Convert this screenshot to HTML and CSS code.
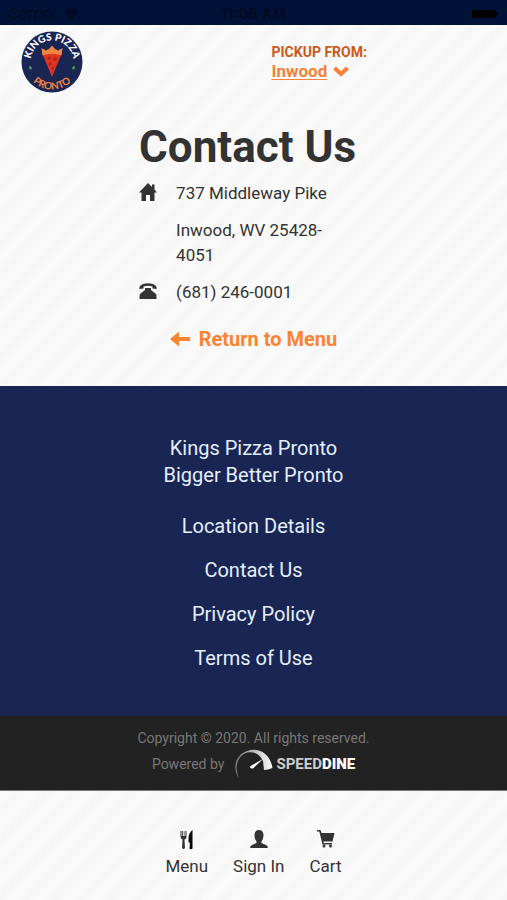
FILE: index.html
```html
<!DOCTYPE html>
<html lang="en">
<head>
<meta charset="utf-8">
<meta name="viewport" content="width=device-width, initial-scale=1">
<title>Contact Us - Kings Pizza Pronto</title>
<link rel="stylesheet" href="styles.css">
</head>
<body>
<div class="status">
  <div class="carrier"><span>Carrier</span>
    <svg width="16" height="12" viewBox="0 0 16 12" aria-hidden="true"><path d="M1 4.500Q8-2 15 4.500M3.500 7Q8 3 12.500 7" fill="none" stroke="currentColor" stroke-width="2.200"/><path d="M5.500 8.700Q8 6.700 10.500 8.700L8 11.500Z" fill="currentColor"/></svg>
  </div>
  <span>11:08 AM</span>
  <div class="battery"><svg width="28" height="10" viewBox="0 0 28 10" aria-hidden="true"><rect x="1" y="1" width="24" height="8" rx="2"/><rect x="25" y="3" width="2" height="4" rx="1"/></svg></div>
</div>
<header class="header">
  <a href="#" class="brand" aria-label="Kings Pizza Pronto">
    <svg width="62" height="62" viewBox="0 0 62 62">
      <defs><path id="top-arc" d="M12 41A21.500 21.500 0 1 1 50 41"/><path id="bottom-arc" d="M3.500 31A27.500 27.500 0 0 0 58.500 31"/></defs>
      <circle cx="31" cy="31" r="30.500" fill="#192552"/>
      <text class="logo-top"><textPath href="#top-arc" startOffset="50%">KINGS PIZZA</textPath></text>
      <text class="logo-bottom"><textPath href="#bottom-arc" startOffset="50%">PRONTO</textPath></text>
      <path d="M21 22Q31 18 41 22L31 46Z" fill="#dd3420"/>
      <path d="M20.500 17L25 19.500 28 18 31 14.500 34 18 37 19.500 41.500 17 40.500 24.500Q31 21 21.500 24.500Z" fill="#ef8440"/>
      <g fill="#b71c20"><circle cx="28" cy="27" r="1.500"/><circle cx="34" cy="28" r="1.800"/><circle cx="29" cy="33" r="1.400"/><circle cx="32" cy="37" r="1.200"/></g>
      <path d="M8 36Q8 34.500 10 35.500L11 37Q10 39 8.500 38.500ZM54 36Q54 34.500 52 35.500L51 37Q52 39 53.500 38.500Z" fill="#5d9c55"/>
    </svg>
  </a>
  <div class="pickup">
    <span class="pickup-label">PICKUP FROM:</span>
    <a href="#" class="pickup-place"><span>Inwood</span><svg width="16" height="11" viewBox="0 0 16 11" aria-hidden="true"><path d="M1.500 2L8 8 14.500 2" fill="none" stroke="currentColor" stroke-width="4"/></svg></a>
  </div>
</header>
<main class="main">
  <div class="contact">
    <h1>Contact Us</h1>
    <address>
      <svg width="18" height="20" viewBox="0 -2 18 20" aria-hidden="true"><path d="M9 0L13 4V1.500H15.500V6.500L18 9.500H15.500V18H11V12H7V18H2.500V9.500H0Z"/></svg>
      <div><p>737 Middleway Pike</p><p>Inwood, WV 25428-4051</p></div>
      <svg width="18" height="20" viewBox="0 -2 18 20" aria-hidden="true"><path d="M.3 7Q0 3.500 4 2Q9 .3 14 2Q18 3.500 17.700 7L13.500 6.500V4.500Q9 3 4.500 4.500V6.500ZM6 6H12V8L17 12Q17.500 12.500 17.500 17H.5Q.5 12.500 1 12L6 8Z"/></svg>
      <p>(681) 246-0001</p>
    </address>
  </div>
  <a href="#" class="return"><svg width="20" height="16" viewBox="0 0 20 16" aria-hidden="true"><path d="M0 8L9 .5V6H20V10H9V15.500Z" fill="currentColor"/></svg><span>Return to Menu</span></a>
</main>
<footer>
  <div class="links">
    <p>Kings Pizza Pronto<br>Bigger Better Pronto</p>
    <a href="#">Location Details</a>
    <a href="#">Contact Us</a>
    <a href="#">Privacy Policy</a>
    <a href="#">Terms of Use</a>
  </div>
  <div class="legal">
    <div>Copyright © 2020. All rights reserved.</div>
    <div class="powered"><span>Powered by</span>
      <a href="#" class="speeddine"><svg width="39" height="30" viewBox="0 0 39 30" aria-hidden="true"><defs><linearGradient id="dial" x2="1" y2="0"><stop stop-color="#777"/><stop offset="1" stop-color="#fff"/></linearGradient></defs><path d="M5 29.500C-2 20 1 6 13 2C24-2 36 4 38.500 19Q34 21 30 21L29 12C24 1 11 1 5.500 9Q0 18 5 29.500Z" fill="url(#dial)"/><path d="M29 10L16.500 17Q15.500 20 19 19.500Z" fill="#fff"/></svg><span>SPEED<b>DINE</b></span></a>
    </div>
  </div>
</footer>
<nav class="nav">
  <a href="#"><svg width="20" height="20" viewBox="0 0 20 20" aria-hidden="true"><path d="M3.500 1V7Q4 9 5.500 9.500L5 18Q6.500 20 8 18L7.500 9.500Q9.500 9 9.500 7V1H8.500V6H7.500V1H6.800V6H5.800V1H5V6H4.500V1Z"/><path d="M15.500 0Q11.500 3 11.500 9V12L13 13 12.500 18.500Q14 20 15.500 18.500Z" fill="#000"/></svg><span>Menu</span></a>
  <a href="#"><svg width="20" height="20" viewBox="0 0 20 20" aria-hidden="true"><path d="M10 0Q14.500 0 14.500 5.500Q14.500 9 12.500 11.500V13L17 15Q18.800 15.500 18.800 18H1.200Q1.200 15.500 3 15L7.500 13V11.500Q5.500 9 5.500 5.500Q5.500 0 10 0Z"/></svg><span>Sign In</span></a>
  <a href="#"><svg width="20" height="20" viewBox="0 0 20 20" aria-hidden="true"><path d="M1 0H4.500L5.500 3H18.500L16.500 11.500H7.500L7.800 13H16V14.500H6.500L3.300 1.500H1Z"/><circle cx="8" cy="16" r="1.500"/><circle cx="14.500" cy="16" r="1.500"/></svg><span>Cart</span></a>
</nav>
</body>
</html>
```
FILE: styles.css
```css
* { box-sizing: border-box; }
body {
  margin: 0;
  font: 17px/24px Roboto, sans-serif;
  color: #333;
  background: repeating-linear-gradient(135deg, #fafafa 0, #fafafa 7px, #f6f6f6 12px, #f6f6f6 15px, #fafafa 20px);
}
a { color: inherit; text-decoration: none; }
svg { display: block; flex: none; }
p { margin: 0; }
.status {
  display: grid;
  grid-template-columns: 1fr auto 1fr;
  align-items: center;
  height: 25px;
  padding: 2px 8px 0;
  font: 15px/20px Inter, sans-serif;
  color: #000820;
  background: #001238;
}
.status > span { font-weight: 600; font-size: 15px; }
.carrier { display: flex; align-items: center; gap: 6px; }
.battery { justify-self: end; }
.header { display: grid; grid-template-columns: 50% 1fr; padding: 6px 21px 0; }
.brand { justify-self: start; }
.logo-top, .logo-bottom { font: 900 9px Lato, sans-serif; text-anchor: middle; fill: #fff; }
.logo-top { font-size: 10px; }
.logo-bottom { font-size: 10px; font-weight: 700; fill: #ef8440; }
.pickup { padding: 12px 0 0 18px; }
.pickup-label { display: block; font-size: 14px; font-weight: 700; line-height: 18px; color: #c95a20; }
.pickup-place { display: flex; align-items: center; gap: 6px; font-weight: 700; line-height: 20px; color: #f5813d; }
.pickup-place span { text-decoration: underline; text-underline-offset: 2px; }
.main { display: flex; flex-direction: column; align-items: center; padding: 26px 20px 35px; }
.contact { width: 49%; }
h1 { margin: 0 0 6px; font-size: 44px; line-height: 56px; white-space: nowrap; }
address { display: grid; grid-template-columns: 18px 1fr; gap: 12px 19px; padding-right: 20px; font-style: normal; line-height: 25px; }
address div { display: grid; gap: 12px; }
address svg { fill: #333; }
.return { display: flex; align-items: center; gap: 9px; margin-top: 22px; font-size: 20px; font-weight: 700; color: #fb8431; }
.links { display: flex; flex-direction: column; align-items: center; gap: 20px; padding: 49px 20px 46px; text-align: center; font-size: 20px; color: #e4efff; background: #192552; }
.links p { line-height: 27px; margin-bottom: 5px; }
.legal { padding: 12px 20px 11px; text-align: center; font-size: 14px; line-height: 21px; color: #777; background: #222; border-bottom: 1px solid #777; }
.powered { display: flex; align-items: center; justify-content: center; gap: 10px; }
.speeddine { display: flex; align-items: center; gap: 3px; font: bold 15px/30px Roboto, sans-serif; color: #ccc; }
.speeddine b { color: #fff; }
.nav { display: flex; justify-content: center; gap: 25px; padding: 39px 20px 22px; }
.nav a { display: flex; flex-direction: column; align-items: center; gap: 4px; }
.nav svg { fill: #333; }
```
